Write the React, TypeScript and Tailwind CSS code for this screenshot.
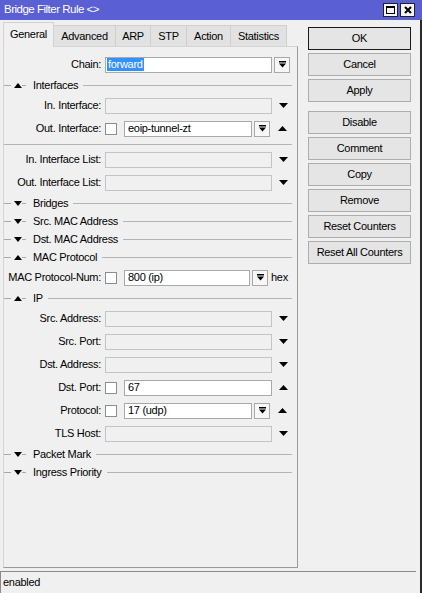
import React from "react";

function TriDown() {
  return (
    <svg width="9" height="5" viewBox="0 0 9 5" className="block">
      <path d="M0 0H9L4.5 5Z" fill="#000" />
    </svg>
  );
}
function TriUp() {
  return (
    <svg width="9" height="5" viewBox="0 0 9 5" className="block">
      <path d="M0 5H9L4.5 0Z" fill="#000" />
    </svg>
  );
}
function TriSmallUp() {
  return (
    <svg width="8" height="5" viewBox="0 0 8 5" className="block">
      <path d="M0 5H8L4 0Z" fill="#000" />
    </svg>
  );
}
function TriSmallDown() {
  return (
    <svg width="8" height="5" viewBox="0 0 8 5" className="block">
      <path d="M0 0H8L4 5Z" fill="#000" />
    </svg>
  );
}

function DropBtn() {
  return (
    <div className="w-[16px] h-[16px] border border-[#a9a9a9] bg-[#f7f7f7] flex items-center justify-center">
      <svg width="7" height="7" viewBox="0 0 7 7" className="block">
        <rect x="0" y="0" width="7" height="1.5" fill="#000" />
        <path d="M0 2.5H7L3.5 6.5Z" fill="#000" />
      </svg>
    </div>
  );
}

function Check() {
  return <div className="w-[12px] h-[12px] border border-[#8d8d8d] bg-white" />;
}

function Field({ w, value, disabled }: { w: string; value?: string; disabled?: boolean }) {
  return (
    <div
      className={`${w} h-[16px] border flex items-center pl-[3px] whitespace-nowrap overflow-hidden ${
        disabled ? "bg-[#f0f0f0] border-[#c4c4c4]" : "bg-white border-[#a9a9a9]"
      }`}
    >
      {value}
    </div>
  );
}

function Row({ label, children }: { label: string; children: React.ReactNode }) {
  return (
    <div className="flex items-center h-[23px]">
      <div className="w-[97px] text-right whitespace-nowrap">{label}</div>
      <div className="ml-[4px] flex items-center">{children}</div>
    </div>
  );
}

function Section({ label, up }: { label: string; up?: boolean }) {
  return (
    <div className="flex items-center h-[18px] pr-[5px]">
      <div className="w-[7px] h-px bg-[#a8a8a8]" />
      <div className="ml-[3px]">{up ? <TriSmallUp /> : <TriSmallDown />}</div>
      <div className="w-[4px] h-px bg-[#a8a8a8]" />
      <div className="ml-[7px] whitespace-nowrap">{label}</div>
      <div className="ml-[5px] flex-1 h-px bg-[#b4b4b4]" />
    </div>
  );
}

function EmptyDrop({ label }: { label: string }) {
  return (
    <Row label={label}>
      <Field w="w-[167px]" disabled />
      <div className="ml-[7px]">
        <TriDown />
      </div>
    </Row>
  );
}

function Btn({ label, primary }: { label: string; primary?: boolean }) {
  return (
    <div
      className={`w-[103px] h-[23px] flex items-center justify-center bg-[#e5e5e5] border ${
        primary ? "border-[#1a1a1a]" : "border-[#adadad]"
      }`}
    >
      {label}
    </div>
  );
}

export default function App() {
  const tabs = ["Advanced", "ARP", "STP", "Action", "Statistics"];
  const tabW = ["w-[62px]", "w-[35px]", "w-[36px]", "w-[44px]", "w-[56px]"];
  return (
    <div className="w-[422px] h-[593px] bg-[#f0f0f0] flex flex-col overflow-hidden text-[11px] text-black font-['Liberation_Sans',Arial,sans-serif] tracking-[-0.3px]">
      {/* title bar */}
      <div className="h-[20px] bg-[#5b5fd4] flex items-center pl-[4px] pr-[7px]">
        <span className="text-white text-[11.5px] tracking-[-0.5px]">Bridge Filter Rule &lt;&gt;</span>
        <div className="ml-auto flex gap-[2px]">
          <div className="w-[15px] h-[14px] bg-[#f4f4f4] border border-[#222] flex items-center justify-center">
            <div className="w-[9px] h-[8px] border border-black border-t-2" />
          </div>
          <div className="w-[15px] h-[14px] bg-[#f4f4f4] border border-[#222] flex items-center justify-center">
            <svg width="8" height="8" viewBox="0 0 8 8" className="block">
              <path d="M1 1L7 7M7 1L1 7" stroke="#000" strokeWidth="2" />
            </svg>
          </div>
        </div>
      </div>

      {/* body */}
      <div className="flex-1 flex border-r-2 border-[#2a2a2a]">
        <div className="pl-[3px] pt-[2px] pb-[3px] w-[298px] flex flex-col">
          {/* tabs */}
          <div className="h-[24px] flex items-end">
            <div className="relative z-10 -mb-px w-[51px] h-[25px] bg-[#f0f0f0] border border-b-0 border-[#d2d2d2] flex items-center justify-center pb-[1px]">
              General
            </div>
            {tabs.map((t, i) => (
              <div
                key={t}
                className={`${tabW[i]} h-[21px] bg-[#e2e2e2] border border-l-0 border-b-0 border-[#cfcfcf] flex items-center justify-center`}
              >
                {t}
              </div>
            ))}
          </div>
          {/* panel */}
          <div className="flex-1 border border-[#d4d4d4] border-r-[#9a9a9a] border-b-[#9a9a9a] pt-[6px]">
            <Row label="Chain:">
              <div className="w-[167px] h-[16px] border border-[#a9a9a9] bg-white flex items-center pl-[1px]">
                <span className="bg-[#3390ff] text-white px-[1px] leading-[13px]">forward</span>
              </div>
              <div className="ml-[2px]">
                <DropBtn />
              </div>
            </Row>
            <Section label="Interfaces" up />
            <EmptyDrop label="In. Interface:" />
            <Row label="Out. Interface:">
              <Check />
              <div className="ml-[7px]">
                <Field w="w-[128px]" value="eoip-tunnel-zt" />
              </div>
              <div className="ml-[2px]">
                <DropBtn />
              </div>
              <div className="ml-[8px]">
                <TriUp />
              </div>
            </Row>
            <div className="h-[8px] flex items-center pr-[5px]">
              <div className="flex-1 h-px bg-[#b4b4b4]" />
            </div>
            <EmptyDrop label="In. Interface List:" />
            <EmptyDrop label="Out. Interface List:" />
            <Section label="Bridges" />
            <Section label="Src. MAC Address" />
            <Section label="Dst. MAC Address" />
            <Section label="MAC Protocol" up />
            <Row label="MAC Protocol-Num:">
              <Check />
              <div className="ml-[7px]">
                <Field w="w-[126px]" value="800 (ip)" />
              </div>
              <div className="ml-[2px]">
                <DropBtn />
              </div>
              <div className="ml-[3px]">hex</div>
            </Row>
            <Section label="IP" up />
            <EmptyDrop label="Src. Address:" />
            <EmptyDrop label="Src. Port:" />
            <EmptyDrop label="Dst. Address:" />
            <Row label="Dst. Port:">
              <Check />
              <div className="ml-[7px]">
                <Field w="w-[148px]" value="67" />
              </div>
              <div className="ml-[7px]">
                <TriUp />
              </div>
            </Row>
            <Row label="Protocol:">
              <Check />
              <div className="ml-[7px]">
                <Field w="w-[128px]" value="17 (udp)" />
              </div>
              <div className="ml-[2px]">
                <DropBtn />
              </div>
              <div className="ml-[8px]">
                <TriUp />
              </div>
            </Row>
            <EmptyDrop label="TLS Host:" />
            <Section label="Packet Mark" />
            <Section label="Ingress Priority" />
          </div>
        </div>

        {/* buttons */}
        <div className="pl-[10px] pt-[7px] flex flex-col gap-[3px]">
          <Btn label="OK" primary />
          <Btn label="Cancel" />
          <Btn label="Apply" />
          <div className="mt-[6px]">
            <Btn label="Disable" />
          </div>
          <Btn label="Comment" />
          <Btn label="Copy" />
          <Btn label="Remove" />
          <Btn label="Reset Counters" />
          <Btn label="Reset All Counters" />
        </div>
      </div>

      {/* status bar */}
      <div className="h-[22px] flex border-r-2 border-[#2a2a2a]">
        <div className="flex-1 border-t border-l border-[#8a8a8a] mr-[4px] flex items-center pl-[2px]">
          enabled
        </div>
      </div>
    </div>
  );
}
